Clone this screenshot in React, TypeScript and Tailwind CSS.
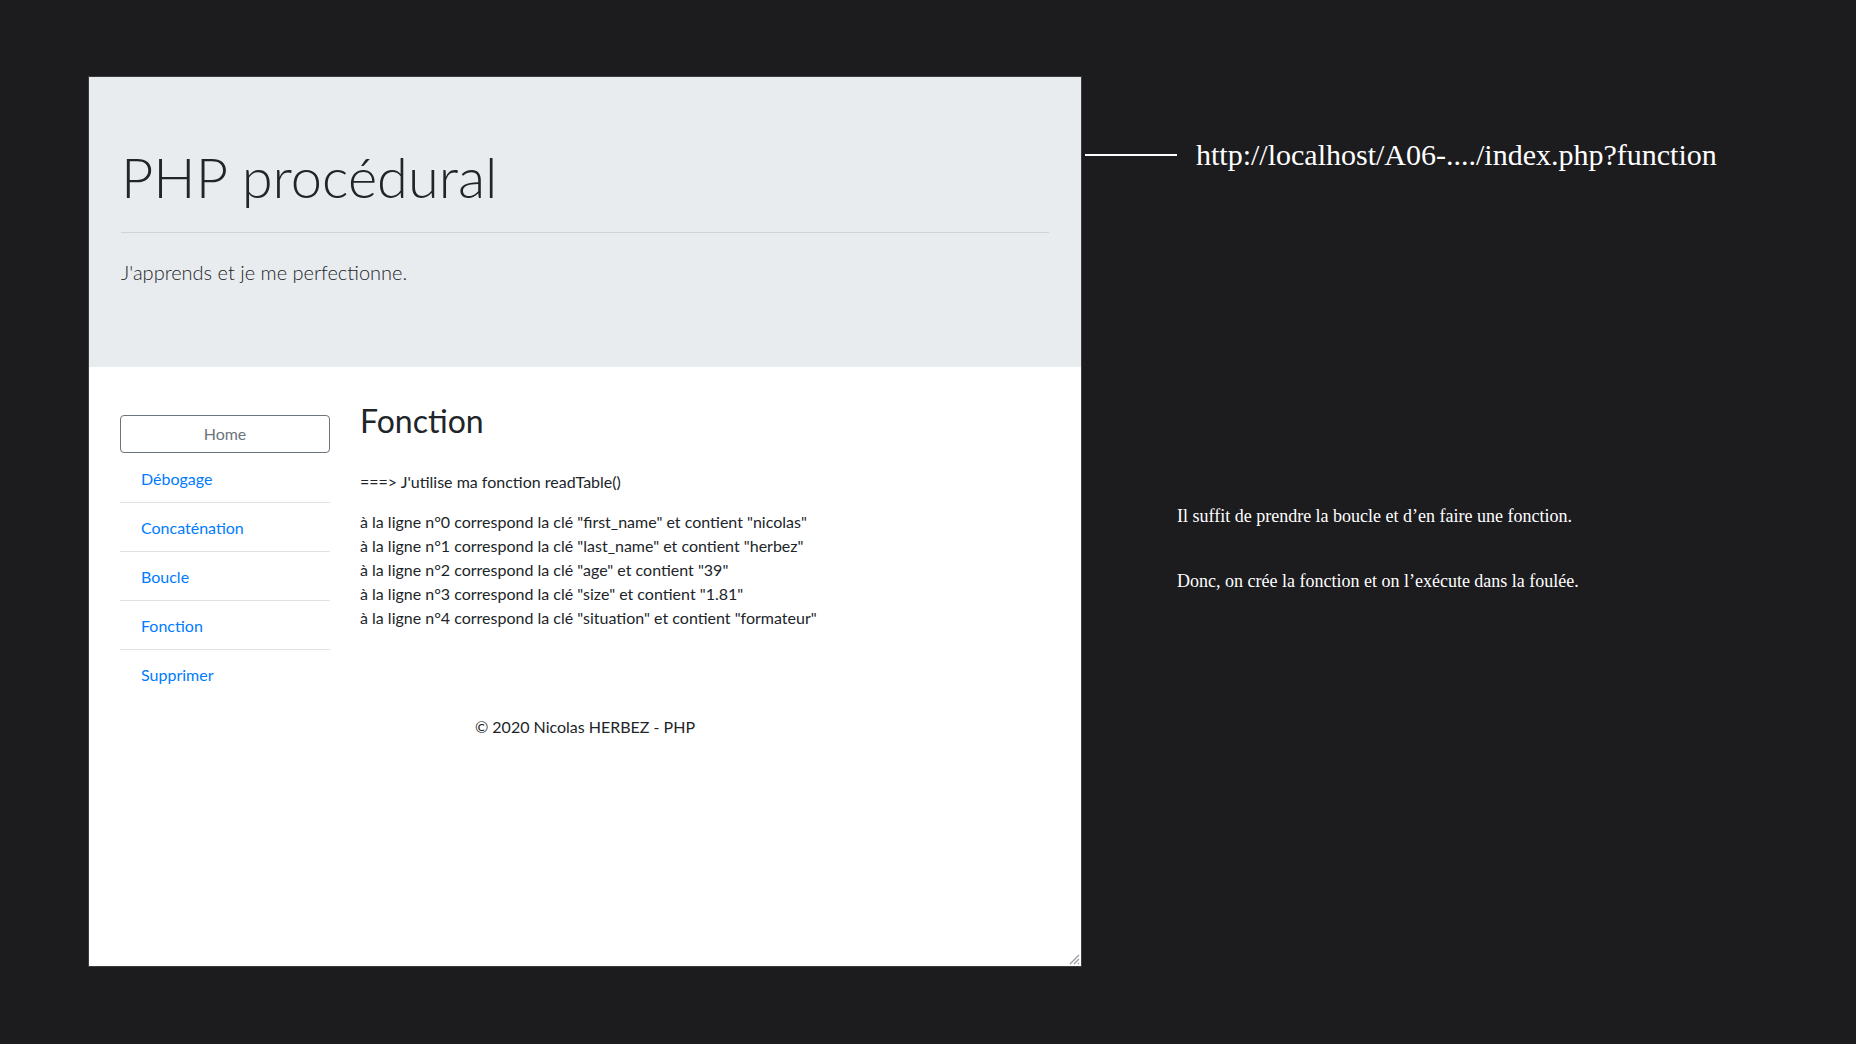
import React from 'react'

const navItems = ['Débogage', 'Concaténation', 'Boucle', 'Fonction', 'Supprimer']

const rows = [
  ['0', 'first_name', 'nicolas'],
  ['1', 'last_name', 'herbez'],
  ['2', 'age', '39'],
  ['3', 'size', '1.81'],
  ['4', 'situation', 'formateur'],
]

const ResizeGrip = () => (
  <svg className="absolute right-[1px] bottom-[1px]" width="12" height="12" viewBox="0 0 12 12">
    <path d="M11 2 L2 11 M11 6 L6 11 M11 10 L10 11" stroke="#9a9a9a" strokeWidth="1.2" />
  </svg>
)

const Page = () => (
  <div className="relative w-[994px] h-[891px] border border-[#3a3c40] bg-white flex flex-col text-[#212529] font-['Lato','Noto_Sans',sans-serif]">
    {/* Jumbotron */}
    <div className="bg-[#e9ecef] px-8 pt-[66px] pb-16 mb-8">
      <h1 className="text-[56px] font-light leading-[1.2]">PHP procédural</h1>
      <hr className="mt-[22px] mb-6 border-t border-black/10" />
      <p className="text-[20px] font-light leading-[30px] mb-4">J'apprends et je me perfectionne.</p>
    </div>

    <div className="w-[960px] mx-auto px-[15px]">
      <div className="flex gap-[30px]">
        {/* Sidebar */}
        <div className="w-[210px] mt-4 shrink-0">
          <button className="w-full h-[38px] border border-[#6c757d] rounded text-[#6c757d] text-base leading-6">
            Home
          </button>
          <ul className="mt-[1px]">
            {navItems.map((item, i) => (
              <li
                key={item}
                className={`pt-[13px] pb-[11px] pl-[21px] text-[#007bff] text-base leading-6 ${i < navItems.length - 1 ? 'border-b border-[#dee2e6]' : ''}`}
              >
                {item}
              </li>
            ))}
          </ul>
        </div>

        {/* Contenu */}
        <div className="flex-1 pt-[3px]">
          <h2 className="text-[32px] font-normal leading-[1.2] mb-2">Fonction</h2>
          <p className="text-base leading-6 mt-[29px] mb-4">===&gt; J'utilise ma fonction readTable()</p>
          <p className="text-base leading-6">
            {rows.map(([n, key, val]) => (
              <span key={n} className="block">
                à la ligne n°{n} correspond la clé "{key}" et contient "{val}"
              </span>
            ))}
          </p>
        </div>
      </div>
      <footer className="mt-[17px] text-center text-base leading-6">© 2020 Nicolas HERBEZ - PHP</footer>
    </div>

    <ResizeGrip />
  </div>
)

export default function App() {
  return (
    <div className="w-[1856px] h-[1044px] bg-[#1c1c1f] flex items-start pt-[76px] pl-[88px] overflow-hidden">
      <Page />

      {/* Annotations */}
      <div className="flex flex-col text-white font-['Liberation_Serif','Times_New_Roman',serif]">
        <div className="flex items-center mt-[61px] h-[36px]">
          <div className="ml-[3px] w-[92px] h-[2px] bg-white" />
          <span className="ml-[19px] text-[30px] leading-[36px] whitespace-nowrap">
            http://localhost/A06-..../index.php?function
          </span>
        </div>
        <p className="ml-[95px] mt-[331px] text-[18px] leading-6 whitespace-nowrap">
          Il suffit de prendre la boucle et d’en faire une fonction.
        </p>
        <p className="ml-[95px] mt-[41px] text-[18px] leading-6 whitespace-nowrap">
          Donc, on crée la fonction et on l’exécute dans la foulée.
        </p>
      </div>
    </div>
  )
}
